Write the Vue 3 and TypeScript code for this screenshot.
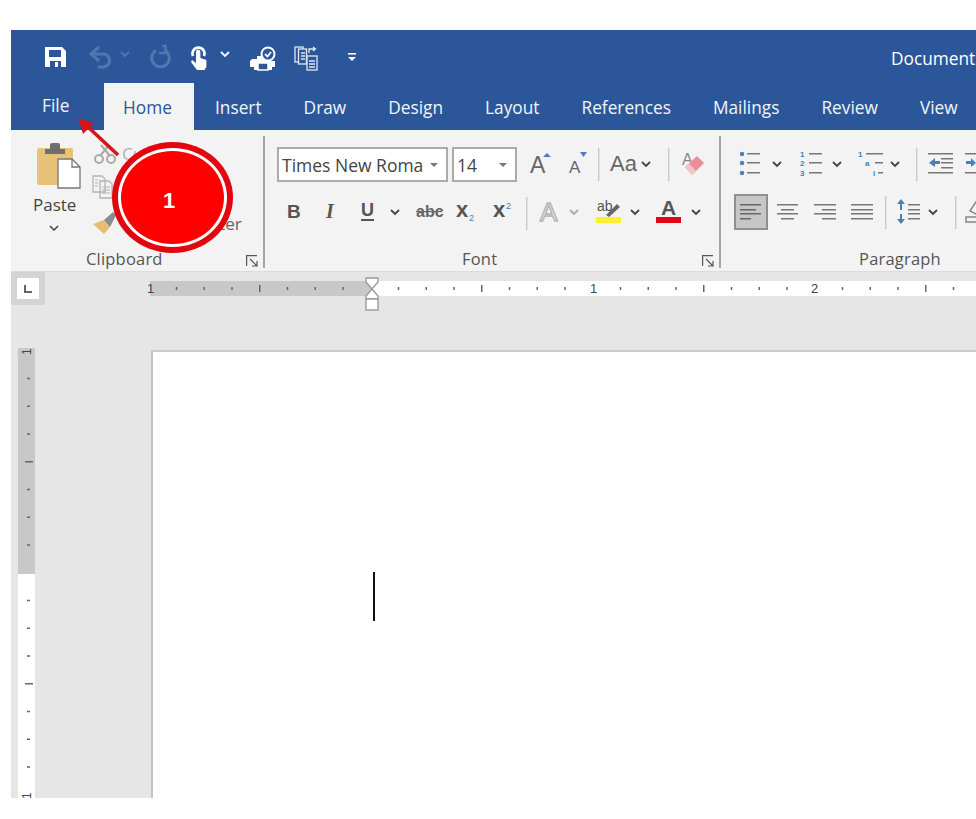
<script setup lang="ts">
type Cell = { k: string; x: number }

const sans = 'font-family="Liberation Sans, sans-serif"'
const serif = 'font-family="Liberation Serif, serif"'
const G = '#666'
const B = '#4a80b8'
const hl = (x1: number, x2: number, y: number, c = '#777', w = 1.5) =>
  `<rect x="${x1}" y="${y}" width="${x2 - x1}" height="${w}" fill="${c}"/>`
const chevron = (c: string, y: number, w = 1.8) =>
  `<path d="M1 ${y}l4 4 4-4" fill="none" stroke="${c}" stroke-width="${w}"/>`
const txt = (x: number, y: number, size: number, s: string, c = G, extra = '') =>
  `<text x="${x}" y="${y}" font-size="${size}" fill="${c}" ${sans} ${extra}>${s}</text>`

const icons: Record<string, string> = {
  blank: '',
  // quick access toolbar (row top = page y 30)
  save: `<path fill="#fff" fill-rule="evenodd" d="M1 17h17l4 4v16H1zM5 20v7h12v-7zM6 31v6h11v-6z"/><rect x="11" y="32" width="3" height="5" fill="#fff"/>`,
  undo: `<path d="M4 24h10a6.500 6.500 0 0 1 0 13H9" fill="none" stroke="#5277b0" stroke-width="3"/><path d="M10 17l-8 7 8 7" fill="none" stroke="#5277b0" stroke-width="3"/>`,
  chevDim: chevron('#5277b0', 22),
  redo: `<path d="M6 20.500a8.800 8.800 0 1 0 9 0" fill="none" stroke="#5277b0" stroke-width="3"/><path d="M12 16h3.500v7H9" fill="none" stroke="#5277b0" stroke-width="2.500"/>`,
  touch: `<path d="M3 26a6 6 0 1 1 11 0" fill="none" stroke="#fff" stroke-width="2.600"/><path fill="#fff" d="M6 22a2.200 2.200 0 0 1 4.400 0v6l6 2v7l-2 3H7l-6-8 1-2 4 3z"/>`,
  chevW: chevron('#fff', 22),
  print: `<path fill="#fff" d="M2 29h5v-3h5v3h4l2 2h7v6h-3v3h-4v-4H8v4H4v-3H0v-6z"/><rect x="8" y="33" width="10" height="7" fill="#2b579a" stroke="#fff" stroke-width="1.500"/><circle cx="18" cy="24" r="7.500" fill="#fff"/><circle cx="18" cy="24" r="5.500" fill="#2b579a"/><path d="M15 24l2.500 2.500 3.500-4.500" fill="none" stroke="#fff" stroke-width="1.800"/>`,
  compare: `<g fill="none" stroke="#dfe6f1" stroke-width="1.300"><rect x="1" y="17" width="8" height="15"/><rect x="4.500" y="19" width="8" height="15" fill="#2b579a"/><rect x="13" y="26" width="10" height="14" fill="#2b579a"/><path d="M7 23h4M7 26h4M7 29h4M15 31h6M15 34h6M15 37h6M15 23v-4h6M19 17l2.500 2-2.500 2"/></g>`,
  custom: `<rect x="1" y="23" width="8" height="1.600" fill="#fff"/><path d="M1 27h8l-4 4z" fill="#fff"/>`,
  // font group, row 1 (top = 147)
  grow: txt(0, 26, 23, 'A') + `<path d="M13 10l4-4 4 4z" fill="${B}"/>`,
  shrink: txt(0, 26, 17, 'A') + `<path d="M11 5h7l-3.500 5z" fill="${B}"/>`,
  sep: `<rect x="0" y="1" width="1.400" height="33" fill="#c8c8c8"/>`,
  sep2: `<rect x="0" y="3" width="1.400" height="33" fill="#c8c8c8"/>`,
  case: txt(0, 24, 22, 'Aa'),
  chev: chevron('#444', 15),
  chev2: chevron('#444', 16),
  chevL: chevron('#aaa', 16),
  clear: txt(0, 18, 16, 'A', '#888') + `<path d="M3 20L15 9l7 7-12 12z" fill="#ec8e98"/><path d="M3 20l4-3.500 7 7.500-4 4z" fill="#f3c3c8"/>`,
  // font group, row 2 (top = 194)
  bold: txt(0, 24, 19, 'B', '#555', 'font-weight="bold"'),
  italic: `<text x="-1" y="24" font-size="20" fill="#555" font-style="italic" font-weight="bold" ${serif}>I</text>`,
  under: txt(0, 22, 18, 'U', '#555', 'font-weight="bold"') + hl(0, 13, 25, '#555', 2),
  strike: txt(0, 23, 16, 'abc', '#666', 'font-weight="bold"') + hl(0, 26, 17, '#666', 1.2),
  sub: txt(0, 23, 22, 'x', '#555', 'font-weight="bold"') + txt(13, 27, 9, '2', B),
  sup: txt(0, 23, 22, 'x', '#555', 'font-weight="bold"') + txt(13, 15, 9, '2', B),
  effect: `<text x="0" y="27" font-size="26" fill="#f3f3f3" stroke="#b5b5b5" stroke-width="1.500" ${sans}>A</text>`,
  hilite: txt(1, 17, 14, 'ab', '#555') + `<path d="M10 21l11-11 3 3-11 10z" fill="#666"/><rect x="0" y="23" width="25" height="6" fill="#ffee33"/>`,
  color: `<text x="5" y="21" font-size="21" fill="#555" font-weight="bold" ${sans}>A</text><rect x="0" y="23" width="25" height="6" fill="#e30613"/>`,
  // paragraph
  bullets: [6, 15, 25].map((y) => `<circle cx="3" cy="${y + 1}" r="2.200" fill="${B}"/>` + hl(8, 21, y)).join(''),
  numbers: [6, 15, 25]
    .map((y, i) => txt(0, y + 4, 8, String(i + 1), B, 'font-weight="bold"') + hl(9, 22, y))
    .join(''),
  multi: txt(0, 10, 8, '1', B, 'font-weight="bold"') + hl(8, 25, 6) + txt(7, 19, 8, 'a', B, 'font-weight="bold"') + hl(17, 25, 15) + txt(15, 29, 8, 'i', B, 'font-weight="bold"') + hl(20, 25, 25),
  outdent: hl(0, 25, 6) + hl(13, 25, 11) + hl(13, 25, 15) + hl(13, 25, 20) + hl(0, 25, 25) + `<path d="M1 16l6-5v3h5v3H7v3z" fill="${B}"/>`,
  indent: hl(0, 25, 6) + hl(13, 25, 11) + hl(13, 25, 15) + hl(13, 25, 20) + hl(0, 25, 25) + `<path d="M11 16l-5-5v3H1v3h5v3z" fill="${B}"/>`,
  left: `<rect x="1" y="1" width="32" height="34" fill="#c6c6c6" stroke="#8f8f8f" stroke-width="2"/>` + hl(6, 27, 10, '#666') + hl(6, 22, 15, '#666') + hl(6, 27, 19, '#666') + hl(6, 17, 24, '#666'),
  center: hl(0, 21, 10) + hl(4, 17, 15) + hl(0, 21, 19) + hl(4, 17, 24),
  right: hl(0, 22, 10) + hl(8, 22, 15) + hl(0, 22, 19) + hl(8, 22, 24),
  justify: hl(0, 22, 10) + hl(0, 22, 15) + hl(0, 22, 19) + hl(0, 22, 24),
  spacing: `<path d="M2 16V7M2 20v9" stroke="${B}" stroke-width="2"/><path d="M-2 10l4-5 4 5zM-2 25l4 5 4-5z" fill="${B}"/>` + hl(9, 21, 10) + hl(9, 21, 15) + hl(9, 21, 19) + hl(9, 21, 24),
  sep3: `<rect x="0" y="2" width="1.400" height="33" fill="#c8c8c8"/>`,
  shade: `<path d="M4 17l6-9 5 5-5 7z" fill="none" stroke="#888" stroke-width="1.500"/>` + `<rect x="0" y="23" width="22" height="5" fill="none" stroke="#888" stroke-width="1.500"/>`,
}

const qat: Cell[] = [
  { k: 'save', x: 44 }, { k: 'undo', x: 89 }, { k: 'chevDim', x: 120 }, { k: 'redo', x: 150 },
  { k: 'touch', x: 190 }, { k: 'chevW', x: 220 }, { k: 'print', x: 250 }, { k: 'compare', x: 294 }, { k: 'custom', x: 347 },
]
const fontTop: Cell[] = [
  { k: 'blank', x: 517 }, { k: 'grow', x: 530 }, { k: 'shrink', x: 569 }, { k: 'sep', x: 598 }, { k: 'case', x: 610 },
  { k: 'chev', x: 641 }, { k: 'sep', x: 668 }, { k: 'clear', x: 682 },
]
const fontBottom: Cell[] = [
  { k: 'blank', x: 277 }, { k: 'bold', x: 287 }, { k: 'italic', x: 327 }, { k: 'under', x: 361 }, { k: 'chev2', x: 390 },
  { k: 'strike', x: 416 }, { k: 'sub', x: 456 }, { k: 'sup', x: 493 }, { k: 'sep2', x: 526 }, { k: 'effect', x: 540 },
  { k: 'chevL', x: 569 }, { k: 'hilite', x: 596 }, { k: 'chev2', x: 630 }, { k: 'color', x: 656 }, { k: 'chev2', x: 691 },
]
const paraTop: Cell[] = [
  { k: 'blank', x: 734 }, { k: 'bullets', x: 739 }, { k: 'chev', x: 772 }, { k: 'numbers', x: 800 }, { k: 'chev', x: 832 },
  { k: 'multi', x: 858 }, { k: 'chev', x: 890 }, { k: 'sep', x: 916 }, { k: 'outdent', x: 928 }, { k: 'indent', x: 965 },
]
const paraBottom: Cell[] = [
  { k: 'left', x: 734 }, { k: 'center', x: 777 }, { k: 'right', x: 814 }, { k: 'justify', x: 851 }, { k: 'sep3', x: 885 },
  { k: 'spacing', x: 899 }, { k: 'chev2', x: 928 }, { k: 'sep3', x: 955 }, { k: 'shade', x: 966 },
]

const sized = (cells: Cell[]) =>
  cells.map((c, i) => ({ ...c, w: (i < cells.length - 1 ? cells[i + 1].x : c.x + 30) - c.x, svg: icons[c.k] }))

const qatCells = sized(qat)
const fontTopCells = sized(fontTop)
const fontBottomCells = sized(fontBottom)
const paraTopCells = sized(paraTop)
const paraBottomCells = sized(paraBottom)

const tabs = ['Insert', 'Draw', 'Design', 'Layout', 'References', 'Mailings', 'Review', 'View']

const step = 27.75
const hTicks = Array.from({ length: 30 }, (_, i) => i - 7)
  .filter((n) => n % 8 !== 0)
  .map((n) => ({ x: 221 + n * step, big: n % 4 === 0 }))
const vTicks = Array.from({ length: 15 }, (_, i) => i + 1)
  .filter((n) => n !== 8)
  .map((n) => ({ y: 2 + n * step, big: n % 4 === 0 }))
</script>

<template>
  <div class="root">
    <div class="window">
      <div class="qat">
        <div class="cells">
          <div v-for="(c, i) in qatCells" :key="i" class="cell" :style="{ width: c.w + 'px' }">
            <svg :width="c.w" height="53" class="ic" v-html="c.svg"></svg>
          </div>
        </div>
        <div class="doc-title">Document</div>
      </div>

      <div class="tabs">
        <div class="tab file">File</div>
        <div class="tab home">Home</div>
        <div v-for="t in tabs" :key="t" class="tab">{{ t }}</div>
      </div>

      <div class="ribbon">
        <section class="group clip">
          <div class="body clip-body">
            <div class="paste">
              <svg width="46" height="47" class="ic">
                <rect x="1" y="6" width="36" height="37" rx="2" fill="#e9c27a" />
                <path d="M9 12V7h5V3a2 2 0 0 1 2-2h6a2 2 0 0 1 2 2v4h5v5z" fill="#6f6f6f" />
                <path d="M22 17h14l8 8v21H22z" fill="#fff" stroke="#777" stroke-width="1.300" />
                <path d="M36 17v8h8" fill="none" stroke="#777" stroke-width="1.300" />
              </svg>
              <div class="paste-label">Paste</div>
              <svg width="10" height="6" class="paste-chev"><path d="M1 1l4 4 4-4" fill="none" stroke="#444" stroke-width="1.500" /></svg>
            </div>
            <div class="small-list">
              <div class="small r1">
                <svg width="30" height="33" class="ic">
                  <circle cx="7" cy="22" r="4" fill="none" stroke="#aaa" stroke-width="2" />
                  <circle cx="19" cy="22" r="4" fill="none" stroke="#aaa" stroke-width="2" />
                  <path d="M8 19l9-11M18 19L9 8" stroke="#aaa" stroke-width="2" />
                </svg>
                <span class="dim">Cut</span>
              </div>
              <div class="small r2">
                <svg width="30" height="33" class="ic">
                  <path d="M1 6h9l3 3v13H1zM8 11h9l3 3v14H8z" fill="#f3f3f3" stroke="#b4b4b4" stroke-width="1.300" />
                  <path d="M10 17h8M10 20h8M10 23h8M3 10h3M3 13h3M3 16h3" stroke="#b4b4b4" stroke-width="1.200" />
                </svg>
                <span class="dim">Copy</span>
              </div>
              <div class="small r3">
                <svg width="30" height="38" class="ic">
                  <path d="M1 21l11-4 6 7-6 7z" fill="#e6bd72" />
                  <path d="M12 17l9-8 3 3-6 12z" fill="#8b8b8b" />
                </svg>
                <span class="painter">Format Painter</span>
              </div>
            </div>
          </div>
          <div class="label-row clip-label">
            <span>Clipboard</span>
            <svg width="12" height="12" class="launcher"><path d="M.6 11V.6H11M4 4l7 7M11 6v5H6" fill="none" stroke="#555" stroke-width="1.200" /></svg>
          </div>
        </section>

        <section class="group font">
          <div class="body">
            <div class="row font-top">
              <div class="combo name"><span>Times New Roma</span><i class="tri"></i></div>
              <div class="combo size"><span>14</span><i class="tri"></i></div>
              <div class="cells">
                <div v-for="(c, i) in fontTopCells" :key="i" class="cell" :style="{ width: c.w + 'px' }">
                  <svg :width="c.w" height="36" class="ic" v-html="c.svg"></svg>
                </div>
              </div>
            </div>
            <div class="row second">
              <div class="cells">
                <div v-for="(c, i) in fontBottomCells" :key="i" class="cell" :style="{ width: c.w + 'px' }">
                  <svg :width="c.w" height="36" class="ic" v-html="c.svg"></svg>
                </div>
              </div>
            </div>
          </div>
          <div class="label-row font-label">
            <span>Font</span>
            <svg width="12" height="12" class="launcher"><path d="M.6 11V.6H11M4 4l7 7M11 6v5H6" fill="none" stroke="#555" stroke-width="1.200" /></svg>
          </div>
        </section>

        <section class="group para">
          <div class="body">
            <div class="row">
              <div class="cells">
                <div v-for="(c, i) in paraTopCells" :key="i" class="cell" :style="{ width: c.w + 'px' }">
                  <svg :width="c.w" height="36" class="ic" v-html="c.svg"></svg>
                </div>
              </div>
            </div>
            <div class="row second">
              <div class="cells">
                <div v-for="(c, i) in paraBottomCells" :key="i" class="cell" :style="{ width: c.w + 'px' }">
                  <svg :width="c.w" height="36" class="ic" v-html="c.svg"></svg>
                </div>
              </div>
            </div>
          </div>
          <div class="label-row para-label"><span>Paragraph</span></div>
        </section>
      </div>

      <div class="workspace">
        <div class="ruler-row">
          <div class="corner">
            <div class="corner-in"><svg width="10" height="10"><path d="M2 1v7h7" fill="none" stroke="#666" stroke-width="2" /></svg></div>
          </div>
          <div class="h-ruler">
            <svg width="826" height="15" class="ic">
              <rect x="0" y="0" width="826" height="15" fill="#fff" />
              <rect x="0" y="0" width="221" height="15" fill="#c8c8c8" />
              <rect
                v-for="(t, i) in hTicks"
                :key="i"
                :x="t.x - 1"
                :y="t.big ? 4 : 6"
                width="1.500"
                :height="t.big ? 7 : 3"
                fill="#666"
              />
              <text x="-3" y="12" font-size="13" fill="#444" class="rn">1</text>
              <text x="440" y="12" font-size="13" fill="#444" class="rn">1</text>
              <text x="661" y="12" font-size="13" fill="#444" class="rn">2</text>
            </svg>
            <svg width="16" height="35" class="marker">
              <path d="M2 1h12v4l-6 7-6-7zM8 12l6 7v3H2v-3z" fill="#fff" stroke="#9a9a9a" stroke-width="1.400" />
              <rect x="2" y="22" width="12" height="11" fill="#fff" stroke="#9a9a9a" stroke-width="1.400" />
            </svg>
          </div>
        </div>
        <div class="doc-row">
          <svg width="17" height="450" class="v-ruler ic">
            <rect x="0" y="0" width="17" height="450" fill="#fff" />
            <rect x="0" y="0" width="17" height="226" fill="#c8c8c8" />
            <rect
              v-for="(t, i) in vTicks"
              :key="i"
              :x="t.big ? 7 : 9"
              :y="t.y"
              :width="t.big ? 8 : 3"
              height="1.500"
              fill="#666"
            />
            <text x="0" y="0" font-size="12" fill="#444" class="rn" transform="translate(13 7) rotate(-90)">1</text>
            <text x="0" y="0" font-size="12" fill="#444" class="rn" transform="translate(13 451) rotate(-90)">1</text>
          </svg>
          <div class="page"><div class="caret"></div></div>
        </div>
      </div>
    </div>

    <svg class="arrow" width="60" height="50">
      <path d="M40 37L9 8" stroke="#d2161c" stroke-width="3.600" />
      <path d="M0 0l16 5-11 11z" fill="#d2161c" />
    </svg>
    <div class="badge"><div class="badge-ring"><span>1</span></div></div>
  </div>
</template>

<style>
html,
body {
  margin: 0;
  background: #fff;
}
</style>

<style scoped>
.root {
  position: relative;
  width: 976px;
  height: 819px;
  overflow: hidden;
  background: #fff;
  font-family: "Open Sans", "Noto Sans", sans-serif;
  color: #555;
}
.window {
  position: absolute;
  inset: 30px 0 21px 11px;
  overflow: hidden;
  display: flex;
  flex-direction: column;
}
.ic {
  display: block;
  overflow: visible;
}
.cells {
  display: flex;
  flex: none;
}
.cell {
  flex: none;
}
.qat {
  height: 53px;
  flex: none;
  background: #2b579a;
  display: flex;
  padding-left: 33px;
}
.doc-title {
  margin-left: 500px;
  color: #fff;
  font-size: 17.300px;
  line-height: 58px;
  white-space: nowrap;
}
.qat .cells {
  width: 347px;
}
.tabs {
  height: 47px;
  flex: none;
  background: #2b579a;
  display: flex;
  padding-left: 31px;
  color: #fff;
  font-size: 17.300px;
  white-space: nowrap;
}
.tab {
  flex: none;
  margin-right: 42px;
  line-height: 50px;
  color: #f2f5fa;
}
.tab.file {
  width: 27px;
  margin-right: 35px;
  line-height: 46px;
}
.tab.home {
  background: #f3f3f3;
  color: #2b579a;
  width: 90px;
  box-sizing: border-box;
  padding-left: 19px;
  margin-right: 21px;
}
.ribbon {
  height: 142px;
  flex: none;
  background: #f3f3f3;
  border-bottom: 1px solid #dcdcdc;
  box-sizing: border-box;
  display: flex;
}
.group {
  flex: none;
  height: 132px;
  margin-top: 6px;
  display: flex;
  flex-direction: column;
  border-right: 2px solid #a4a4a4;
  box-sizing: border-box;
}
.group.clip {
  width: 254px;
}
.group.font {
  width: 456px;
  padding-left: 12px;
}
.group.para {
  width: 300px;
  border-right: 0;
  padding-left: 13px;
}
.body {
  height: 114px;
  padding-top: 11px;
  box-sizing: border-box;
  flex: none;
}
.row {
  height: 36px;
  display: flex;
}
.row.second {
  margin-top: 11px;
}
.clip-body {
  display: flex;
  padding: 6px 0 0 22px;
}
.paste {
  width: 59px;
  flex: none;
}
.paste .ic {
  margin-left: 3px;
}
.paste-label {
  font-size: 17px;
  line-height: 22px;
  margin-top: 5px;
  color: #444;
}
.paste-chev {
  display: block;
  margin: 9px 0 0 16px;
}
.small-list {
  margin-top: -5px;
}
.small {
  display: flex;
  align-items: center;
  white-space: nowrap;
  font-size: 17.200px;
}
.r1 { height: 33px; }
.r2 { height: 33px; }
.r3 { height: 38px; }
.dim {
  color: #b0b0b0;
}
.painter {
  color: #666;
  position: relative;
  top: 1px;
}
.label-row {
  height: 18px;
  display: flex;
  align-items: center;
  font-size: 16.500px;
  line-height: 18px;
  color: #555;
  letter-spacing: 0.2px;
}
.clip-label {
  padding-left: 75px;
}
.font-label {
  padding-left: 185px;
}
.para-label {
  padding-left: 125px;
}
.launcher {
  margin-left: auto;
  margin-right: 5px;
  margin-top: 4px;
}
.combo {
  box-sizing: border-box;
  height: 35px;
  background: #fff;
  border: 2px solid #ababab;
  display: flex;
  align-items: center;
  font-size: 17.500px;
  color: #444;
  padding-left: 3px;
  white-space: nowrap;
  position: relative;
  flex: none;
}
.combo.name {
  width: 171px;
  margin-right: 4px;
}
.combo.size {
  width: 65px;
}
.tri {
  position: absolute;
  right: 8px;
  top: 14px;
  width: 0;
  height: 0;
  border: 4px solid transparent;
  border-top: 4px solid #777;
  border-bottom: 0;
}
.workspace {
  flex: 1;
  background: #e6e6e6;
  display: flex;
  flex-direction: column;
  min-height: 0;
}
.ruler-row {
  height: 76px;
  flex: none;
  display: flex;
  align-items: flex-start;
}
.corner {
  width: 34px;
  height: 33px;
  background: #d4d4d4;
  display: flex;
  align-items: center;
  justify-content: center;
  flex: none;
}
.corner-in {
  width: 22px;
  height: 21px;
  background: #fff;
  display: flex;
  align-items: center;
  justify-content: center;
}
.h-ruler {
  position: relative;
  margin: 9px 0 0 105px;
  width: 826px;
  height: 15px;
  flex: none;
}
.marker {
  position: absolute;
  left: 214px;
  top: -4px;
}
.rn {
  font-family: "Liberation Sans", sans-serif;
}
.doc-row {
  flex: 1;
  display: flex;
  min-height: 0;
  align-items: flex-start;
}
.v-ruler {
  flex: none;
  margin-left: 7px;
}
.page {
  flex: 1;
  margin: 2px 0 0 116px;
  height: 448px;
  background: #fff;
  border-top: 2px solid #cacaca;
  border-left: 2px solid #c4c4c4;
  box-sizing: border-box;
  padding: 220px 0 0 220px;
}
.caret {
  width: 1.500px;
  height: 49px;
  background: #111;
}
.arrow {
  position: absolute;
  left: 78px;
  top: 118px;
  overflow: visible;
}
.badge {
  position: absolute;
  left: 112px;
  top: 142px;
  width: 121px;
  height: 111px;
  border-radius: 50%;
  background: #e2060f;
  display: flex;
  align-items: center;
  justify-content: center;
}
.badge-ring {
  width: 109px;
  height: 99px;
  border-radius: 50%;
  background: #ff0000;
  border: 3px solid #fff;
  box-sizing: border-box;
  display: flex;
  align-items: center;
  justify-content: center;
  color: #fff;
  font: bold 22px "Liberation Sans", sans-serif;
  padding: 6px 7px 0 0;
}
</style>
